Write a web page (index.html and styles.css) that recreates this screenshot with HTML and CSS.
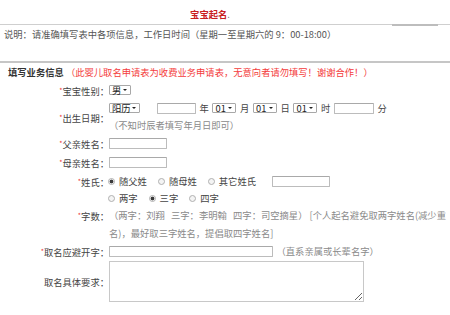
FILE: index.html
```html
<!DOCTYPE html>
<html lang="zh-CN">
<head>
<meta charset="utf-8">
<title>宝宝起名</title>
<link rel="stylesheet" href="styles.css">
</head>
<body>
<div class="page">
  <div class="title"><span class="title-text">宝宝起名</span><span class="title-dot">.</span></div>
  <div class="rule"><span class="rule-a"></span><span class="rule-b"></span><span class="rule-c"></span></div>
  <div class="intro">说明：请准确填写表中各项信息，工作日时间（星期一至星期六的 9：00-18:00）</div>
  <div class="rule2"></div>
  <div class="section-head"><b class="section-title">填写业务信息</b> <span class="warn">（此婴儿取名申请表为收费业务申请表，无意向者请勿填写！谢谢合作！）</span></div>

  <div class="form">
    <div class="row">
      <div class="lbl"><span class="req">*</span>宝宝性别：</div>
      <div class="ctl">
        <div class="line"><span class="sel sel-xs">男<i class="caret"></i></span></div>
      </div>
    </div>

    <div class="row">
      <div class="lbl lbl-mid"><span class="req">*</span>出生日期：</div>
      <div class="ctl">
        <div class="line line-16 date">
          <span class="sel sel-md">阳历<i class="caret"></i></span>
          <input class="inp inp-year" type="text">
          <span>年</span>
          <span class="sel sel-sm">01<i class="caret"></i></span>
          <span>月</span>
          <span class="sel sel-sm">01<i class="caret"></i></span>
          <span>日</span>
          <span class="sel sel-sm">01<i class="caret"></i></span>
          <span>时</span>
          <input class="inp inp-min" type="text">
          <span>分</span>
        </div>
        <div class="line note">（不知时辰者填写年月日即可）</div>
      </div>
    </div>

    <div class="row">
      <div class="lbl"><span class="req">*</span>父亲姓名：</div>
      <div class="ctl"><div class="line"><input class="inp inp-name" type="text"></div></div>
    </div>

    <div class="row">
      <div class="lbl"><span class="req">*</span>母亲姓名：</div>
      <div class="ctl"><div class="line"><input class="inp inp-name" type="text"></div></div>
    </div>

    <div class="row">
      <div class="lbl lbl-top"><span class="req">*</span>姓氏：</div>
      <div class="ctl">
        <div class="line opts">
          <label class="opt"><input type="radio" name="xs" checked>随父姓</label>
          <label class="opt"><input type="radio" name="xs">随母姓</label>
          <label class="opt"><input type="radio" name="xs">其它姓氏</label>
          <input class="inp inp-name inp-other" type="text">
        </div>
        <div class="line line-16 opts">
          <label class="opt"><input type="radio" name="zs">两字</label>
          <label class="opt"><input type="radio" name="zs" checked>三字</label>
          <label class="opt"><input type="radio" name="zs">四字</label>
        </div>
      </div>
    </div>

    <div class="row">
      <div class="lbl lbl-top"><span class="req">*</span>字数：</div>
      <div class="ctl">
        <p class="count-text">（两字：刘翔&nbsp;&nbsp;&nbsp;三字：李明翰&nbsp;&nbsp;&nbsp;四字：司空摘星） [个人起名避免取两字姓名(减少重<br>名)，最好取三字姓名，提倡取四字姓名]</p>
      </div>
    </div>

    <div class="row">
      <div class="lbl"><span class="req">*</span>取名应避开字：</div>
      <div class="ctl">
        <div class="line avoid"><input class="inp inp-avoid" type="text"><span class="note">（直系亲属或长辈名字）</span></div>
      </div>
    </div>

    <div class="row">
      <div class="lbl lbl-mid">取名具体要求：</div>
      <div class="ctl"><textarea class="req-text"></textarea></div>
    </div>
  </div>
</div>
</body>
</html>
```

FILE: styles.css
```css
html, body {
  margin: 0;
  padding: 0;
  background: #fff;
}

body {
  font-family: "Noto Sans CJK SC", "Noto Sans", sans-serif;
  font-size: 9.3px;
  line-height: 18px;
  color: #444;
}

.page {
  width: 450px;
}

.title {
  height: 24px;
  box-sizing: border-box;
  padding-top: 6px;
  padding-right: 30px;
  line-height: 16px;
  text-align: center;
}

.title-text {
  color: #c8201e;
  font-weight: bold;
}

.title-dot {
  color: #777;
}

.rule {
  display: grid;
  grid-template-columns: 392px 46px 1fr;
  align-items: start;
  height: 1px;
}

.rule-a,
.rule-c {
  height: 1px;
  background: #cfcfcf;
}

.rule-b {
  height: 2px;
  background: #bdbdbd;
}

.intro {
  height: 36px;
  padding-left: 4px;
  color: #555;
  line-height: 18px;
}

.rule2 {
  height: 2px;
  background: #c6c6c6;
}

.section-head {
  height: 18px;
  padding-left: 8px;
  line-height: 18px;
}

.section-title {
  color: #333;
  font-weight: bold;
}

.warn {
  color: #f43b3b;
}

.form {
  display: flex;
  flex-direction: column;
}

.row {
  display: flex;
}

.lbl {
  flex: none;
  width: 109px;
  text-align: right;
  line-height: 18px;
  color: #444;
  white-space: nowrap;
}

.lbl-mid {
  align-self: center;
}

.lbl-top {
  align-self: flex-start;
}

.req {
  color: #e33;
  font-size: 7px;
  vertical-align: 2px;
}

.ctl {
  flex: 1;
  min-width: 0;
}

.line {
  height: 18px;
  display: flex;
  align-items: center;
  white-space: nowrap;
}

.line-16 {
  height: 16px;
}

.note {
  color: #8a8a8a;
}

.date {
  gap: 3.6px;
}

.sel {
  box-sizing: border-box;
  height: 10px;
  display: inline-flex;
  align-items: center;
  padding-left: 2px;
  border: 1px solid #a8a8a8;
  border-radius: 1px;
  background: #fff;
  color: #222;
  line-height: 8px;
}

.sel-xs { width: 22px; }
.sel-sm { width: 24px; }
.sel-md { width: 31px; }

.caret {
  margin-left: auto;
  margin-right: 3px;
  width: 0;
  height: 0;
  border-left: 2px solid transparent;
  border-right: 2px solid transparent;
  border-top: 2.5px solid #222;
}

.inp {
  box-sizing: border-box;
  height: 11px;
  margin: 0;
  padding: 0 2px;
  border: 1px solid #bcbcbc;
  border-top-color: #a9a9a9;
  border-radius: 1px;
  background: #fff;
  font: inherit;
}

.inp-year {
  width: 39px;
  margin-left: 13.4px;
}

.inp-min {
  width: 40px;
}

.inp-name {
  width: 58px;
}

.inp-other {
  margin-left: 4px;
}

.opts {
  gap: 12px;
}

.opt {
  display: inline-flex;
  align-items: center;
  gap: 4px;
  color: #444;
}

.opt input[type="radio"] {
  appearance: none;
  -webkit-appearance: none;
  box-sizing: border-box;
  width: 7px;
  height: 7px;
  margin: 0 0 0 -1px;
  border: 1px solid #b0b0b0;
  border-radius: 50%;
  background: #f4f4f4;
}

.opt input[type="radio"]:checked {
  background: radial-gradient(circle, #3a3a3a 0 1.6px, #f4f4f4 2.2px);
}

.count-text {
  margin: 0;
  line-height: 18px;
  color: #8a8a8a;
  white-space: nowrap;
}

.avoid {
  gap: 3.5px;
}

.inp-avoid {
  width: 164px;
}

.req-text {
  display: block;
  box-sizing: border-box;
  width: 255px;
  height: 41px;
  margin: 0;
  padding: 2px;
  border: 1px solid #c8c8c8;
  font: inherit;
}
```
